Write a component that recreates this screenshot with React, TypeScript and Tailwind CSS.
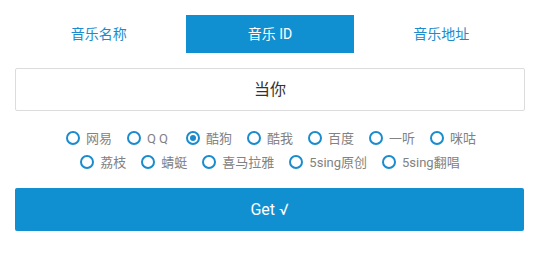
import React from "react";

const font = { fontFamily: 'Roboto, "Noto Sans CJK SC", sans-serif' };

function Radio({ label, checked, wide }: { label: string; checked?: boolean; wide?: boolean }) {
  return (
    <label className="flex items-center">
      <span className="w-[14px] h-[14px] rounded-full border-2 border-[#1a8ccd] flex items-center justify-center box-border">
        {checked && <span className="w-[6px] h-[6px] rounded-full bg-[#1a8ccd]" />}
      </span>
      <span className={"ml-[6px] text-[13px] text-[#828282] leading-none " + (wide ? "tracking-[3px]" : "")}>{label}</span>
    </label>
  );
}

export default function App() {
  const row1 = ["网易", "QQ", "酷狗", "酷我", "百度", "一听", "咪咕"];
  const row2 = ["荔枝", "蜻蜓", "喜马拉雅", "5sing原创", "5sing翻唱"];
  return (
    <div className="w-[540px] h-[278px] bg-white px-[15px] pt-[15px]" style={font}>
      <div className="grid grid-cols-3 gap-x-[4px] h-[38px]">
        <div className="flex items-center justify-center text-[14px] text-[#1a8ccd]">音乐名称</div>
        <div className="flex items-center justify-center text-[14px] text-white bg-[#1190d1]">音乐 ID</div>
        <div className="flex items-center justify-center text-[14px] text-[#1a8ccd]">音乐地址</div>
      </div>
      <div className="mt-[15px] h-[43px] w-[510px] border border-[#dcdcdc] rounded-[2px] flex items-center justify-center text-[16px] text-[#333333]">
        当你
      </div>
      <div className="mt-[15px] flex flex-col">
        <div className="h-[24px] flex items-center justify-center gap-x-[15px] pl-[2px]">
          {row1.map((l) => (
            <Radio key={l} label={l} checked={l === "酷狗"} wide={l === "QQ"} />
          ))}
        </div>
        <div className="h-[24px] flex items-center justify-center gap-x-[15px]">
          {row2.map((l) => (
            <Radio key={l} label={l} />
          ))}
        </div>
      </div>
      <button className="mt-[14px] h-[43px] w-[509px] bg-[#1190d1] rounded-[2px] text-white text-[16px] flex items-center justify-center">
        Get √
      </button>
    </div>
  );
}
